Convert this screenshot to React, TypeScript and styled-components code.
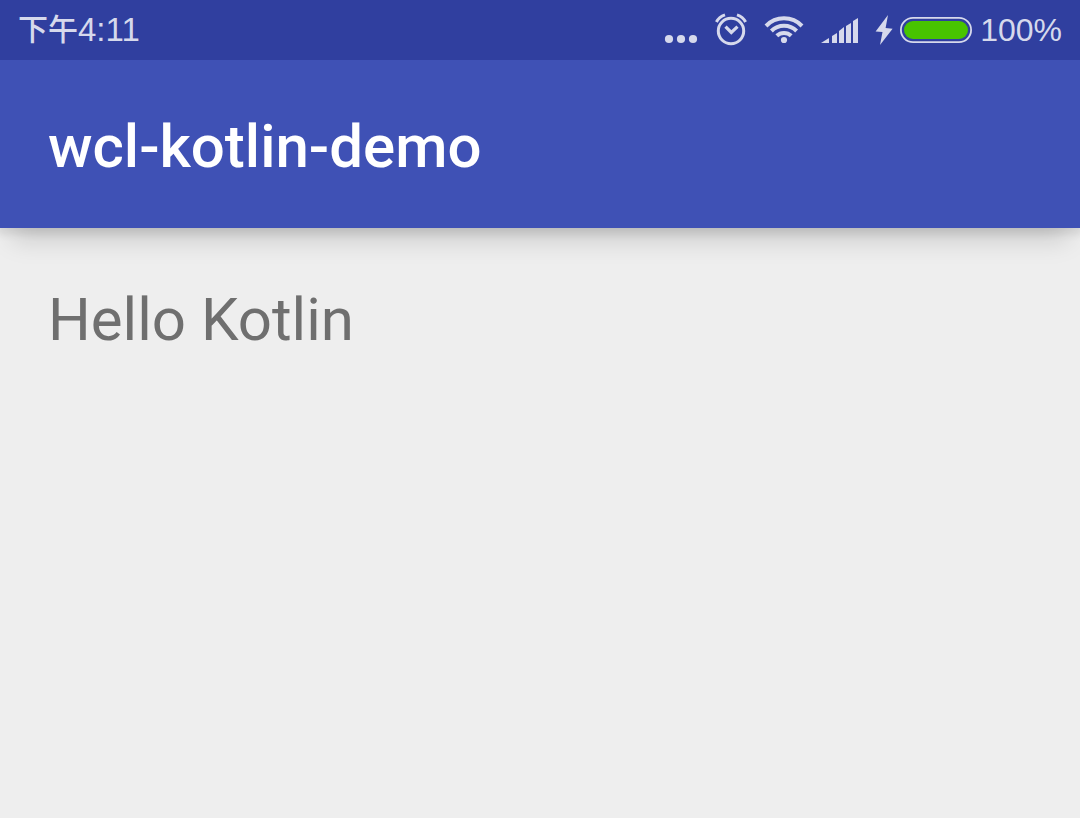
import React from 'react';
import styled, { createGlobalStyle } from 'styled-components';

const GlobalStyle = createGlobalStyle`
  *, *::before, *::after { box-sizing: border-box; }
  body {
    margin: 0;
    background: #eeeeee;
    font-family: Roboto, "Noto Sans CJK SC", sans-serif;
  }
`;

const Screen = styled.div`
  min-height: 100vh;
  display: flex;
  flex-direction: column;
  overflow-x: hidden;
`;

const StatusBar = styled.div`
  position: relative;
  z-index: 1;
  display: flex;
  align-items: center;
  justify-content: space-between;
  height: 60px;
  padding: 0 18px;
  background: #303f9f;
  color: #d6d9ec;
  font-family: "Liberation Sans", "Noto Sans CJK SC", sans-serif;
  font-size: 33px;
  line-height: 40px;
`;

const Clock = styled.time`
  display: flex;
  align-items: center;
`;

const DayPart = styled.span`
  font-size: 30px;
  font-weight: 500;
`;

const Indicators = styled.div`
  display: flex;
  align-items: center;
`;

const Icon = styled.svg<{ $gap: number }>`
  display: block;
  flex: none;
  margin-right: ${({ $gap }) => $gap}px;
  fill: currentColor;
`;

const Charge = styled.span`
  font-size: 32px;
`;

const AppBar = styled.header`
  display: flex;
  align-items: center;
  height: 168px;
  padding: 6px 48px 0;
  background: #3f51b5;
  box-shadow: 0 24px 24px -12px rgba(0, 0, 0, 0.15), 0 3px 8px 3px rgba(0, 0, 0, 0.09);
`;

const Title = styled.h1`
  margin: 0;
  color: #ffffff;
  font-size: 60px;
  font-weight: 500;
  line-height: 72px;
`;

const Content = styled.main`
  padding: 56px 48px;
`;

const Greeting = styled.p`
  margin: 0;
  color: #6f6f6f;
  font-size: 60px;
  line-height: 72px;
`;

const bars = [
  'M1 43 L9 38 V43 Z',
  'M12 36 L17 33 V43 H12 Z',
  'M19 31 L24 27 V43 H19 Z',
  'M26 26 L31 23 V43 H26 Z',
  'M33 21 L38 18 V43 H33 Z',
];

export default function App() {
  return (
    <>
      <GlobalStyle />
      <Screen>
        <StatusBar>
          <Clock dateTime="16:11">
            <DayPart>下午</DayPart>4:11
          </Clock>
          <Indicators>
            <Icon $gap={16} width="34" height="60" viewBox="664 0 34 60" aria-label="More notifications">
              <circle cx="669" cy="39" r="4.1" />
              <circle cx="681" cy="39" r="4.1" />
              <circle cx="693" cy="39" r="4.1" />
            </Icon>
            <Icon $gap={16} width="34" height="60" viewBox="714 0 34 60" aria-label="Alarm set">
              <g fill="none" stroke="currentColor" strokeWidth="3">
                <circle cx="731" cy="31" r="12.7" />
                <path d="M725.5 26.7 L731.3 32.5 L737.5 26.7" strokeWidth="3.2" />
                <path d="M716.4 22 Q719 16.8 725 14.8" />
                <path d="M745.6 22 Q743 16.8 737 14.8" />
              </g>
            </Icon>
            <Icon $gap={16} width="40" height="60" viewBox="764 0 40 60" aria-label="Wi-Fi">
              <g fill="none" stroke="currentColor" strokeWidth="4">
                <path d="M766 26 A25 25 0 0 1 802 26" />
                <path d="M771.4 31 A17.8 17.8 0 0 1 796.6 31" />
                <path d="M776.8 35.8 A10.4 10.4 0 0 1 791.2 35.8" />
              </g>
              <circle cx="784" cy="40" r="3.1" />
            </Icon>
            <Icon $gap={16} width="39" height="60" viewBox="0 0 39 60" aria-label="Mobile signal">
              {bars.map((d) => (
                <path key={d} d={d} />
              ))}
            </Icon>
            <Icon $gap={7} width="18" height="60" viewBox="875 0 18 60" aria-label="Charging">
              <path d="M888 15 L875.6 31.4 L882.5 32 L880 45 L892.6 28.8 L885.6 28 Z" />
            </Icon>
            <Icon $gap={8} width="72" height="60" viewBox="900 0 72 60" aria-label="Battery full">
              <rect x="900.9" y="17.9" width="70.2" height="24.2" rx="12.1" fill="none" stroke="currentColor" strokeWidth="1.8" />
              <rect x="904" y="21" width="64" height="18" rx="9" fill="#48c400" />
            </Icon>
            <Charge>100%</Charge>
          </Indicators>
        </StatusBar>
        <AppBar>
          <Title>wcl-kotlin-demo</Title>
        </AppBar>
        <Content>
          <Greeting>Hello Kotlin</Greeting>
        </Content>
      </Screen>
    </>
  );
}
